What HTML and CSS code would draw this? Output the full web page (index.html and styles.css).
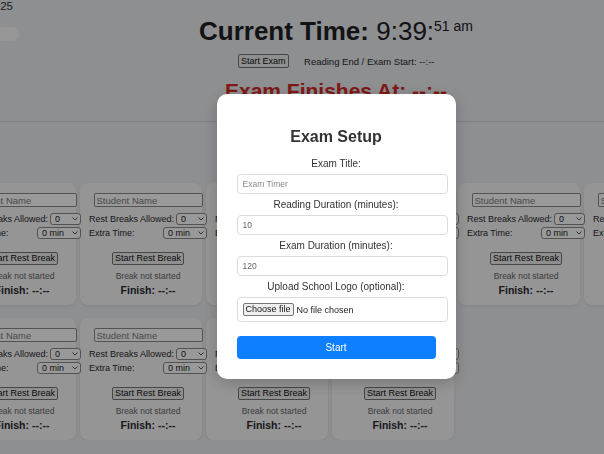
FILE: index.html
```html
<!DOCTYPE html>
<html lang="en">
<head>
<meta charset="utf-8">
<title>Exam Timer</title>
<link rel="stylesheet" href="styles.css">
</head>
<body>
<div class="page">
  <header class="top">
    <div class="corner">
      <div class="date">Monday, 4 August 2025</div>
      <span class="toggle"><span class="knob"></span></span>
    </div>
    <div class="center">
      <h1 class="clock"><span class="clock-label">Current Time:</span> <span class="clock-time">9:39:</span><span class="clock-sec">51 am</span></h1>
      <div class="controls">
        <button class="btn-small" type="button">Start Exam</button>
        <span class="reading">Reading End / Exam Start: --:--</span>
      </div>
      <div class="finish">Exam Finishes At: --:--</div>
    </div>
    <div class="corner-right"></div>
  </header>
  <hr class="rule">
  <main class="grid">
    <section class="card"><div class="card-body">
      <input class="name" type="text" placeholder="Student Name">
      <div class="row row-first"><span>Rest Breaks Allowed:</span><span class="sel sel-num"><select><option>0</option></select><svg class="chev" viewBox="0 0 6 4" width="6" height="4"><polyline points="0.5,0.5 3,3 5.5,0.5" fill="none" stroke="#555" stroke-width="1"/></svg></span></div>
      <div class="row"><span>Extra Time:</span><span class="sel sel-min"><select><option>0 min</option></select><svg class="chev" viewBox="0 0 6 4" width="6" height="4"><polyline points="0.5,0.5 3,3 5.5,0.5" fill="none" stroke="#555" stroke-width="1"/></svg></span></div>
      <button class="btn-rest" type="button">Start Rest Break</button>
      <div class="status">Break not started</div>
      <div class="fin">Finish: --:--</div>
    </div></section>
    <section class="card"><div class="card-body">
      <input class="name" type="text" placeholder="Student Name">
      <div class="row row-first"><span>Rest Breaks Allowed:</span><span class="sel sel-num"><select><option>0</option></select><svg class="chev" viewBox="0 0 6 4" width="6" height="4"><polyline points="0.5,0.5 3,3 5.5,0.5" fill="none" stroke="#555" stroke-width="1"/></svg></span></div>
      <div class="row"><span>Extra Time:</span><span class="sel sel-min"><select><option>0 min</option></select><svg class="chev" viewBox="0 0 6 4" width="6" height="4"><polyline points="0.5,0.5 3,3 5.5,0.5" fill="none" stroke="#555" stroke-width="1"/></svg></span></div>
      <button class="btn-rest" type="button">Start Rest Break</button>
      <div class="status">Break not started</div>
      <div class="fin">Finish: --:--</div>
    </div></section>
    <section class="card"><div class="card-body">
      <input class="name" type="text" placeholder="Student Name">
      <div class="row row-first"><span>Rest Breaks Allowed:</span><span class="sel sel-num"><select><option>0</option></select><svg class="chev" viewBox="0 0 6 4" width="6" height="4"><polyline points="0.5,0.5 3,3 5.5,0.5" fill="none" stroke="#555" stroke-width="1"/></svg></span></div>
      <div class="row"><span>Extra Time:</span><span class="sel sel-min"><select><option>0 min</option></select><svg class="chev" viewBox="0 0 6 4" width="6" height="4"><polyline points="0.5,0.5 3,3 5.5,0.5" fill="none" stroke="#555" stroke-width="1"/></svg></span></div>
      <button class="btn-rest" type="button">Start Rest Break</button>
      <div class="status">Break not started</div>
      <div class="fin">Finish: --:--</div>
    </div></section>
    <section class="card"><div class="card-body">
      <input class="name" type="text" placeholder="Student Name">
      <div class="row row-first"><span>Rest Breaks Allowed:</span><span class="sel sel-num"><select><option>0</option></select><svg class="chev" viewBox="0 0 6 4" width="6" height="4"><polyline points="0.5,0.5 3,3 5.5,0.5" fill="none" stroke="#555" stroke-width="1"/></svg></span></div>
      <div class="row"><span>Extra Time:</span><span class="sel sel-min"><select><option>0 min</option></select><svg class="chev" viewBox="0 0 6 4" width="6" height="4"><polyline points="0.5,0.5 3,3 5.5,0.5" fill="none" stroke="#555" stroke-width="1"/></svg></span></div>
      <button class="btn-rest" type="button">Start Rest Break</button>
      <div class="status">Break not started</div>
      <div class="fin">Finish: --:--</div>
    </div></section>
    <section class="card"><div class="card-body">
      <input class="name" type="text" placeholder="Student Name">
      <div class="row row-first"><span>Rest Breaks Allowed:</span><span class="sel sel-num"><select><option>0</option></select><svg class="chev" viewBox="0 0 6 4" width="6" height="4"><polyline points="0.5,0.5 3,3 5.5,0.5" fill="none" stroke="#555" stroke-width="1"/></svg></span></div>
      <div class="row"><span>Extra Time:</span><span class="sel sel-min"><select><option>0 min</option></select><svg class="chev" viewBox="0 0 6 4" width="6" height="4"><polyline points="0.5,0.5 3,3 5.5,0.5" fill="none" stroke="#555" stroke-width="1"/></svg></span></div>
      <button class="btn-rest" type="button">Start Rest Break</button>
      <div class="status">Break not started</div>
      <div class="fin">Finish: --:--</div>
    </div></section>
    <section class="card"><div class="card-body">
      <input class="name" type="text" placeholder="Student Name">
      <div class="row row-first"><span>Rest Breaks Allowed:</span><span class="sel sel-num"><select><option>0</option></select><svg class="chev" viewBox="0 0 6 4" width="6" height="4"><polyline points="0.5,0.5 3,3 5.5,0.5" fill="none" stroke="#555" stroke-width="1"/></svg></span></div>
      <div class="row"><span>Extra Time:</span><span class="sel sel-min"><select><option>0 min</option></select><svg class="chev" viewBox="0 0 6 4" width="6" height="4"><polyline points="0.5,0.5 3,3 5.5,0.5" fill="none" stroke="#555" stroke-width="1"/></svg></span></div>
      <button class="btn-rest" type="button">Start Rest Break</button>
      <div class="status">Break not started</div>
      <div class="fin">Finish: --:--</div>
    </div></section>
    <section class="card"><div class="card-body">
      <input class="name" type="text" placeholder="Student Name">
      <div class="row row-first"><span>Rest Breaks Allowed:</span><span class="sel sel-num"><select><option>0</option></select><svg class="chev" viewBox="0 0 6 4" width="6" height="4"><polyline points="0.5,0.5 3,3 5.5,0.5" fill="none" stroke="#555" stroke-width="1"/></svg></span></div>
      <div class="row"><span>Extra Time:</span><span class="sel sel-min"><select><option>0 min</option></select><svg class="chev" viewBox="0 0 6 4" width="6" height="4"><polyline points="0.5,0.5 3,3 5.5,0.5" fill="none" stroke="#555" stroke-width="1"/></svg></span></div>
      <button class="btn-rest" type="button">Start Rest Break</button>
      <div class="status">Break not started</div>
      <div class="fin">Finish: --:--</div>
    </div></section>
    <section class="card"><div class="card-body">
      <input class="name" type="text" placeholder="Student Name">
      <div class="row row-first"><span>Rest Breaks Allowed:</span><span class="sel sel-num"><select><option>0</option></select><svg class="chev" viewBox="0 0 6 4" width="6" height="4"><polyline points="0.5,0.5 3,3 5.5,0.5" fill="none" stroke="#555" stroke-width="1"/></svg></span></div>
      <div class="row"><span>Extra Time:</span><span class="sel sel-min"><select><option>0 min</option></select><svg class="chev" viewBox="0 0 6 4" width="6" height="4"><polyline points="0.5,0.5 3,3 5.5,0.5" fill="none" stroke="#555" stroke-width="1"/></svg></span></div>
      <button class="btn-rest" type="button">Start Rest Break</button>
      <div class="status">Break not started</div>
      <div class="fin">Finish: --:--</div>
    </div></section>
    <section class="card"><div class="card-body">
      <input class="name" type="text" placeholder="Student Name">
      <div class="row row-first"><span>Rest Breaks Allowed:</span><span class="sel sel-num"><select><option>0</option></select><svg class="chev" viewBox="0 0 6 4" width="6" height="4"><polyline points="0.5,0.5 3,3 5.5,0.5" fill="none" stroke="#555" stroke-width="1"/></svg></span></div>
      <div class="row"><span>Extra Time:</span><span class="sel sel-min"><select><option>0 min</option></select><svg class="chev" viewBox="0 0 6 4" width="6" height="4"><polyline points="0.5,0.5 3,3 5.5,0.5" fill="none" stroke="#555" stroke-width="1"/></svg></span></div>
      <button class="btn-rest" type="button">Start Rest Break</button>
      <div class="status">Break not started</div>
      <div class="fin">Finish: --:--</div>
    </div></section>
    <section class="card"><div class="card-body">
      <input class="name" type="text" placeholder="Student Name">
      <div class="row row-first"><span>Rest Breaks Allowed:</span><span class="sel sel-num"><select><option>0</option></select><svg class="chev" viewBox="0 0 6 4" width="6" height="4"><polyline points="0.5,0.5 3,3 5.5,0.5" fill="none" stroke="#555" stroke-width="1"/></svg></span></div>
      <div class="row"><span>Extra Time:</span><span class="sel sel-min"><select><option>0 min</option></select><svg class="chev" viewBox="0 0 6 4" width="6" height="4"><polyline points="0.5,0.5 3,3 5.5,0.5" fill="none" stroke="#555" stroke-width="1"/></svg></span></div>
      <button class="btn-rest" type="button">Start Rest Break</button>
      <div class="status">Break not started</div>
      <div class="fin">Finish: --:--</div>
    </div></section>
  </main>
</div>

<div class="overlay">
  <div class="modal">
    <h2 class="modal-title">Exam Setup</h2>
    <div class="field">
      <label class="field-label">Exam Title:</label>
      <input class="field-input" type="text" placeholder="Exam Timer">
    </div>
    <div class="field">
      <label class="field-label">Reading Duration (minutes):</label>
      <input class="field-input" type="text" value="10">
    </div>
    <div class="field">
      <label class="field-label">Exam Duration (minutes):</label>
      <input class="field-input" type="text" value="120">
    </div>
    <div class="field">
      <label class="field-label">Upload School Logo (optional):</label>
      <div class="file-box"><button class="file-btn" type="button">Choose file</button><span class="file-none">No file chosen</span></div>
    </div>
    <button class="start" type="button">Start</button>
  </div>
</div>
</body>
</html>
```
FILE: styles.css
```css
body {
  margin: 0;
  background: #eceef2;
  font-family: "Liberation Sans", Arial, sans-serif;
  color: #2c2c30;
  overflow: hidden;
}

.page {
  width: 780px;
  margin-left: -54px;
}

/* header */
.top {
  display: grid;
  grid-template-columns: 68px 1fr 68px;
}

.corner {
  display: flex;
  flex-direction: column;
  align-items: flex-end;
}

.date {
  font-size: 11.5px;
  line-height: 13px;
  white-space: nowrap;
  color: #333;
  margin-right: 1px;
}

.toggle {
  display: block;
  width: 34px;
  height: 14px;
  border-radius: 7px;
  background: #fbfbfb;
  margin-top: 14px;
  margin-right: -5px;
  position: relative;
}

.knob {
  position: absolute;
  left: 2px;
  top: 2px;
  width: 10px;
  height: 10px;
  border-radius: 50%;
  background: #ddd;
}

.center {
  text-align: center;
}

.clock {
  margin: 16px 0 0;
  font-size: 26px;
  line-height: 30px;
  font-weight: normal;
  color: #1f2023;
}

.clock-label {
  font-weight: bold;
}

.clock-sec {
  font-size: 14px;
  line-height: 14px;
  vertical-align: 9px;
}

.controls {
  display: flex;
  justify-content: center;
  align-items: center;
  gap: 15px;
  margin-top: 8px;
  height: 14px;
}

.btn-small {
  font-family: "Liberation Sans", Arial, sans-serif;
  font-size: 9px;
  height: 14px;
  padding: 0 2.5px;
  border: 1px solid #767676;
  border-radius: 2px;
  background: #efefef;
  color: #111;
}

.reading {
  font-size: 9.5px;
  color: #2a2a2d;
}

.finish {
  margin-top: 10px;
  font-size: 21px;
  line-height: 25px;
  font-weight: bold;
  color: #d42a26;
}

.rule {
  margin: 18px 0 0;
  border: 0;
  border-top: 1px solid #cfd1d6;
  height: 0;
}

/* cards */
.grid {
  display: grid;
  grid-template-columns: repeat(6, 122px);
  column-gap: 4px;
  row-gap: 13px;
  margin-top: 61px;
  padding-left: 8px;
}

.card {
  height: 122px;
  box-sizing: border-box;
  padding: 10px 0 0 9px;
  background: #f8f8fa;
  border-radius: 8px;
  box-shadow: 0 1px 3px rgba(0, 0, 0, 0.08);
}

.card-body {
  width: 118px;
  display: flex;
  flex-direction: column;
  align-items: center;
}

.name {
  width: 109px;
  height: 14px;
  box-sizing: border-box;
  border: 1px solid #8a8a8a;
  border-radius: 2px;
  padding: 0 2px;
  font-family: "Liberation Sans", Arial, sans-serif;
  font-size: 9.5px;
  background: #fff;
  margin: 0;
}

.name::placeholder {
  color: #7a7a7a;
}

.row {
  width: 118px;
  display: flex;
  justify-content: space-between;
  align-items: center;
  font-size: 9px;
  line-height: 12px;
  height: 12px;
  margin-top: 2px;
  color: #2a2a2d;
}

.row-first {
  margin-top: 6px;
}

.sel {
  position: relative;
  display: block;
  height: 12px;
}

.sel select {
  appearance: none;
  -webkit-appearance: none;
  display: block;
  height: 12px;
  box-sizing: border-box;
  border: 1px solid #8a8a8a;
  border-radius: 3px;
  background: #fff;
  font-family: "Liberation Sans", Arial, sans-serif;
  font-size: 9px;
  line-height: 10px;
  padding: 0 0 0 4px;
  margin: 0;
  color: #222;
}

.sel-num select {
  width: 31px;
}

.sel-min select {
  width: 44px;
}

.chev {
  position: absolute;
  right: 3px;
  top: 4px;
}

.btn-rest {
  margin-top: 13px;
  height: 13px;
  padding: 0 1.5px;
  font-family: "Liberation Sans", Arial, sans-serif;
  font-size: 9px;
  line-height: 11px;
  border: 1px solid #767676;
  border-radius: 2px;
  background: #efefef;
  color: #111;
}

.status {
  margin-top: 5.5px;
  font-size: 8.5px;
  line-height: 11px;
  color: #666;
}

.fin {
  margin-top: 2.5px;
  font-size: 10.5px;
  line-height: 13px;
  font-weight: bold;
  color: #2a2a2d;
}

/* modal */
.overlay {
  position: fixed;
  top: 0;
  left: -68px;
  width: 808px;
  height: 473px;
  background: rgba(0, 0, 0, 0.4);
  display: flex;
  align-items: center;
  justify-content: center;
}

.modal {
  width: 199px;
  padding: 20px;
  background: #fff;
  border-radius: 10px;
  box-shadow: 0 4px 16px rgba(0, 0, 0, 0.2);
  text-align: center;
}

.modal-title {
  margin: 13px 0 12px;
  font-size: 16px;
  line-height: 19px;
  font-weight: bold;
  color: #333;
}

.field + .field {
  margin-top: 5px;
}

.field-label {
  display: block;
  font-size: 10px;
  line-height: 12px;
  margin-bottom: 4px;
  color: #333;
}

.field-input {
  display: block;
  width: 100%;
  height: 18px;
  padding: 0 5px;
  margin: 0;
  border: 1px solid #dcdcdc;
  border-radius: 4px;
  font-family: "Liberation Sans", Arial, sans-serif;
  font-size: 8.5px;
  color: #666;
  background: #fff;
  text-align: left;
}

.field-input::placeholder {
  color: #888;
}

.file-box {
  display: flex;
  align-items: center;
  gap: 3px;
  width: 100%;
  height: 23px;
  padding: 0 5px;
  border: 1px solid #dcdcdc;
  border-radius: 4px;
  font-size: 9px;
  color: #222;
}

.file-btn {
  height: 13px;
  padding: 0 2px;
  font-family: "Liberation Sans", Arial, sans-serif;
  font-size: 9px;
  line-height: 11px;
  border: 1px solid #767676;
  border-radius: 2px;
  background: #efefef;
  color: #111;
}

.start {
  display: block;
  width: 100%;
  height: 23px;
  margin-top: 14px;
  border: 0;
  border-radius: 4px;
  background: #0d7fff;
  color: #fff;
  font-family: "Liberation Sans", Arial, sans-serif;
  font-size: 10px;
}
```
